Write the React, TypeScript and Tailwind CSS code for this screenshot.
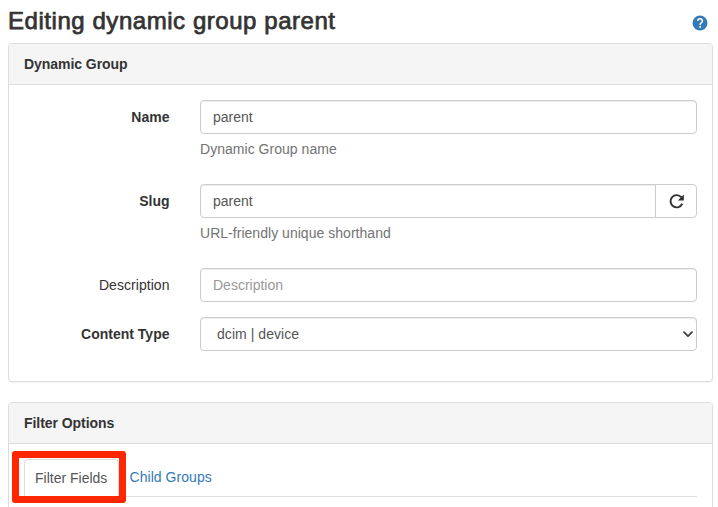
import type { ReactNode } from "react";

const control = "h-[34px] border border-[#ccc] bg-white text-[#555] shadow-[inset_0_1px_1px_rgba(0,0,0,0.075)] outline-none placeholder:text-[#999]";

function Panel({ title, className, children }: { title: string; className: string; children: ReactNode }) {
  return (
    <section className={`w-[705px] rounded border border-[#ddd] bg-white shadow-[0_1px_1px_rgba(0,0,0,0.05)] ${className}`}>
      <h2 className="h-[41px] rounded-t-[3px] border-b border-[#ddd] bg-[#f5f5f5] px-[15px] pt-[10px] font-bold leading-5 tracking-[-0.05px]">{title}</h2>
      {children}
    </section>
  );
}

function Field({ label, bold, help, className, children }: { label: string; bold?: boolean; help?: string; className: string; children: ReactNode }) {
  return (
    <div className={`flex ${className}`}>
      <label className={`w-[161px] shrink-0 pr-[0.5px] pt-[7px] text-right leading-5 ${bold ? "font-bold" : "tracking-[0.05px]"}`}>{label}</label>
      <div className="ml-[30px] w-[497px]">
        {children}
        {help && <p className="mt-[5px] leading-5 tracking-[0.03px] text-[#737373]">{help}</p>}
      </div>
    </div>
  );
}

export default function App() {
  return (
    <main className="h-[507px] w-[718px] overflow-hidden bg-white pl-2 font-['Liberation_Sans',Arial,sans-serif] text-sm text-[#333]">
      <header className="flex h-[43px] w-[705px] items-start justify-between">
        <h1 className="pt-[7px] text-2xl font-normal leading-7 tracking-[0.55px] [-webkit-text-stroke:0.75px_#333]">Editing dynamic group parent</h1>
        <svg className="mr-[5px] mt-[15px] size-4" viewBox="0 0 16 16" fill="none">
          <circle cx="8" cy="8" r="7.5" fill="#337ab7" />
          <path d="M5.7 6.1C5.7 3 10.4 3 10.4 6.1C10.4 7.8 8.1 7.8 8.1 9.9" stroke="#fff" strokeWidth="1.5" />
          <path d="M7.3 11.1H8.9V12.7H7.3Z" fill="#fff" />
        </svg>
      </header>

      <Panel title="Dynamic Group" className="h-[339px]">
        <form className="pt-[15px]">
          <Field label="Name" bold help="Dynamic Group name" className="h-[84px]">
            <input className={`w-full rounded px-3 ${control}`} defaultValue="parent" />
          </Field>
          <Field label="Slug" bold help="URL-friendly unique shorthand" className="h-[84px]">
            <div className="flex">
              <input className={`w-[456px] rounded-l px-3 ${control}`} defaultValue="parent" />
              <button type="button" className="-ml-px flex h-[34px] w-[42px] items-center justify-center rounded-r border border-[#ccc] bg-white">
                <svg className="h-[15px] w-[15px]" viewBox="0 0 14 14" fill="none">
                  <path d="M11.6 3.2A5.7 5.7 0 1 0 12.4 9" stroke="#333" strokeWidth="1.8" />
                  <path d="M13.9 0.4V6H8.2Z" fill="#333" />
                </svg>
              </button>
            </div>
          </Field>
          <Field label="Description" className="h-[49px]">
            <input className={`w-full rounded px-3 ${control}`} placeholder="Description" />
          </Field>
          <Field label="Content Type" bold className="h-[49px]">
            <button type="button" className={`flex w-full items-center justify-between rounded pl-4 pr-[3px] tracking-[0.05px] ${control}`}>
              dcim | device
              <svg className="h-[7px] w-[10px]" viewBox="0 0 10 7" fill="none" stroke="#444" strokeWidth="1.9">
                <path d="M1 1.2 5 5.2 9 1.2" strokeLinecap="round" strokeLinejoin="round" />
              </svg>
            </button>
          </Field>
        </form>
      </Panel>

      <Panel title="Filter Options" className="mt-5 h-[130px]">
        <nav className="relative mx-[15px] mt-[15px] flex h-[38px] border-b border-[#ddd]">
          <a className="h-[38px] w-[95px] rounded-t border border-b-0 border-[#ddd] bg-white pl-[10px] pt-[8px] leading-5 text-[#555]">Filter Fields</a>
          <a className="pl-[10.5px] pt-[8px] leading-5 tracking-[0.05px] text-[#337ab7]">Child Groups</a>
          <span className="pointer-events-none absolute -left-[12px] -top-2 h-[52px] w-[114px] rounded-[3px] border-[7px] border-[#ff2600]" />
        </nav>
      </Panel>
    </main>
  );
}
